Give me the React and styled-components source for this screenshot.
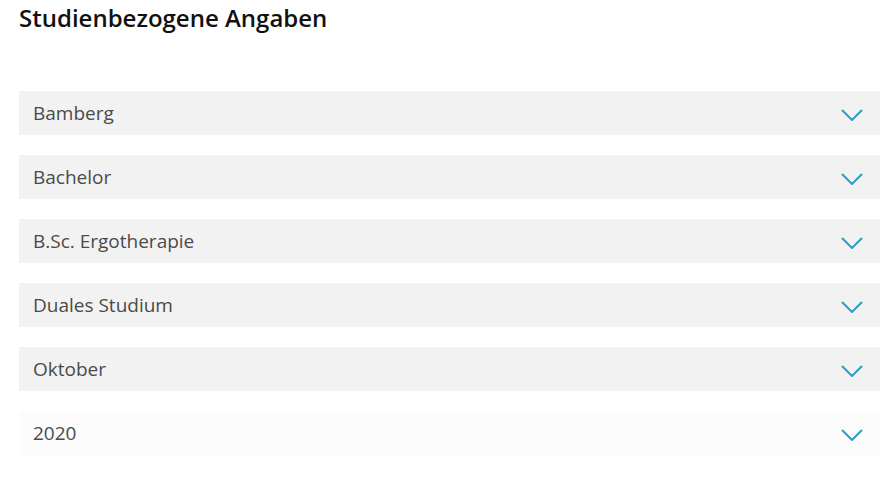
import React from 'react'
import styled, { createGlobalStyle } from 'styled-components'

const GlobalStyle = createGlobalStyle`
  html, body {
    margin: 0;
    padding: 0;
    background: #fff;
    font-family: "Open Sans", "Liberation Sans", sans-serif;
  }
`

const Page = styled.div`
  padding: 0 2px 0 19px;
`

const Title = styled.h2`
  margin: 0;
  padding-top: 2px;
  font-size: 24px;
  line-height: 32px;
  font-weight: 600;
  color: #111;
`

const List = styled.div`
  display: flex;
  flex-direction: column;
  gap: 20px;
  margin-top: 57px;
`

const Field = styled.div`
  display: flex;
  align-items: center;
  justify-content: space-between;
  height: 44px;
  padding: 0 17px 0 14px;
  background: ${p => (p.$filled ? '#f2f2f2' : '#fcfcfc')};
  font-size: 19px;
  color: #4a4a4a;
  cursor: pointer;
`

const Chevron = styled.svg`
  width: 22px;
  height: 12px;
  margin-top: 4px;
  flex-shrink: 0;
`

const items = [
  { label: 'Bamberg', filled: true },
  { label: 'Bachelor', filled: true },
  { label: 'B.Sc. Ergotherapie', filled: true },
  { label: 'Duales Studium', filled: true },
  { label: 'Oktober', filled: true },
  { label: '2020', filled: false },
]

export default function App() {
  return (
    <Page>
      <GlobalStyle />
      <Title>Studienbezogene Angaben</Title>
      <List>
        {items.map(item => (
          <Field key={item.label} $filled={item.filled}>
            <span>{item.label}</span>
            <Chevron viewBox="0 0 22 12" fill="none">
              <path d="M1 1l10 10L21 1" stroke="#2e9cc6" strokeWidth="2" />
            </Chevron>
          </Field>
        ))}
      </List>
    </Page>
  )
}
